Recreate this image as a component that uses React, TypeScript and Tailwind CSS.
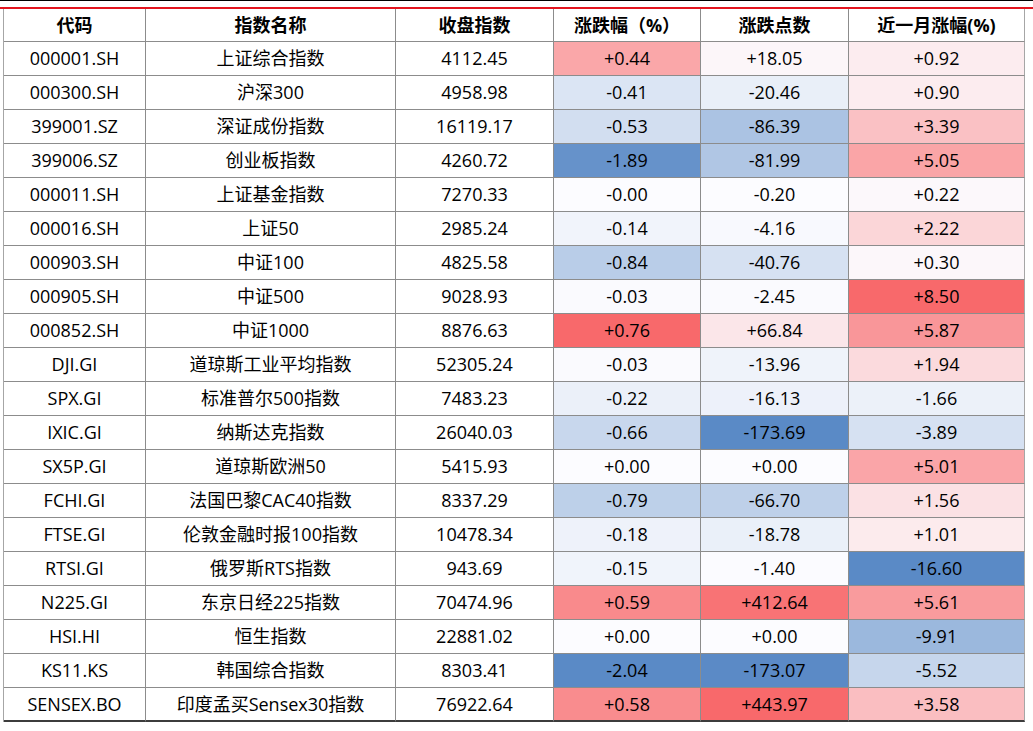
const headers = ["代码", "指数名称", "收盘指数", "涨跌幅（%）", "涨跌点数", "近一月涨幅(%)"];

const rows: string[][] = [
  ["000001.SH", "上证综合指数", "4112.45", "+0.44", "+18.05", "+0.92"],
  ["000300.SH", "沪深300", "4958.98", "-0.41", "-20.46", "+0.90"],
  ["399001.SZ", "深证成份指数", "16119.17", "-0.53", "-86.39", "+3.39"],
  ["399006.SZ", "创业板指数", "4260.72", "-1.89", "-81.99", "+5.05"],
  ["000011.SH", "上证基金指数", "7270.33", "-0.00", "-0.20", "+0.22"],
  ["000016.SH", "上证50", "2985.24", "-0.14", "-4.16", "+2.22"],
  ["000903.SH", "中证100", "4825.58", "-0.84", "-40.76", "+0.30"],
  ["000905.SH", "中证500", "9028.93", "-0.03", "-2.45", "+8.50"],
  ["000852.SH", "中证1000", "8876.63", "+0.76", "+66.84", "+5.87"],
  ["DJI.GI", "道琼斯工业平均指数", "52305.24", "-0.03", "-13.96", "+1.94"],
  ["SPX.GI", "标准普尔500指数", "7483.23", "-0.22", "-16.13", "-1.66"],
  ["IXIC.GI", "纳斯达克指数", "26040.03", "-0.66", "-173.69", "-3.89"],
  ["SX5P.GI", "道琼斯欧洲50", "5415.93", "+0.00", "+0.00", "+5.01"],
  ["FCHI.GI", "法国巴黎CAC40指数", "8337.29", "-0.79", "-66.70", "+1.56"],
  ["FTSE.GI", "伦敦金融时报100指数", "10478.34", "-0.18", "-18.78", "+1.01"],
  ["RTSI.GI", "俄罗斯RTS指数", "943.69", "-0.15", "-1.40", "-16.60"],
  ["N225.GI", "东京日经225指数", "70474.96", "+0.59", "+412.64", "+5.61"],
  ["HSI.HI", "恒生指数", "22881.02", "+0.00", "+0.00", "-9.91"],
  ["KS11.KS", "韩国综合指数", "8303.41", "-2.04", "-173.07", "-5.52"],
  ["SENSEX.BO", "印度孟买Sensex30指数", "76922.64", "+0.58", "+443.97", "+3.58"],
];

// excel-style 3 colour scale: blue (min) -> white (0) -> red (max)
const WHITE = [252, 252, 255];
const BLUE = [90, 138, 198];
const RED = [248, 105, 107];

function scaleColor(v: number, min: number, max: number) {
  let t = 0;
  let to = WHITE;
  if (v < 0 && min < 0) {
    t = v / min;
    to = BLUE;
  } else if (v > 0 && max > 0) {
    t = v / max;
    to = RED;
  }
  const c = WHITE.map((w, i) => Math.round(w + (to[i] - w) * t));
  return `rgb(${c[0]}, ${c[1]}, ${c[2]})`;
}

const colStats = [3, 4, 5].map((ci) => {
  const vals = rows.map((r) => parseFloat(r[ci]));
  return { min: Math.min(...vals), max: Math.max(...vals) };
});

const cell =
  "flex items-center justify-center border-r border-b border-[#8c8c8c] whitespace-nowrap";

export default function App() {
  return (
    <div className="h-[731px] w-[1033px] overflow-hidden bg-white font-['Open_Sans','Noto_Sans_CJK_SC',sans-serif] text-[18px] text-black">
      <div className="h-px bg-black" />
      <div className="h-[6px]" />
      <div className="h-[2px] bg-[#e3141e]" />

      <div className="ml-[3px] w-[1021px] border-l border-[#a6a6a6]">
        <div className="grid grid-cols-[142px_250px_158px_147px_148px_176px]">
          {headers.map((h, i) => (
            <div
              key={h}
              className={`${cell} h-[33px] font-bold ${i === 5 ? "border-r-[#a6a6a6]" : ""}`}
            >
              {h}
            </div>
          ))}

          {rows.map((r, ri) =>
            r.map((v, ci) => {
              const last = ri === rows.length - 1;
              const stat = ci >= 3 ? colStats[ci - 3] : null;
              return (
                <div
                  key={`${ri}-${ci}`}
                  className={`${cell} h-[34px] ${ci === 5 ? "border-r-[#a6a6a6]" : ""} ${
                    last ? "border-b-2 border-b-[#3c3c3c]" : ""
                  }`}
                  style={
                    stat
                      ? { backgroundColor: scaleColor(parseFloat(v), stat.min, stat.max) }
                      : undefined
                  }
                >
                  {v}
                </div>
              );
            }),
          )}
        </div>
      </div>
    </div>
  );
}
